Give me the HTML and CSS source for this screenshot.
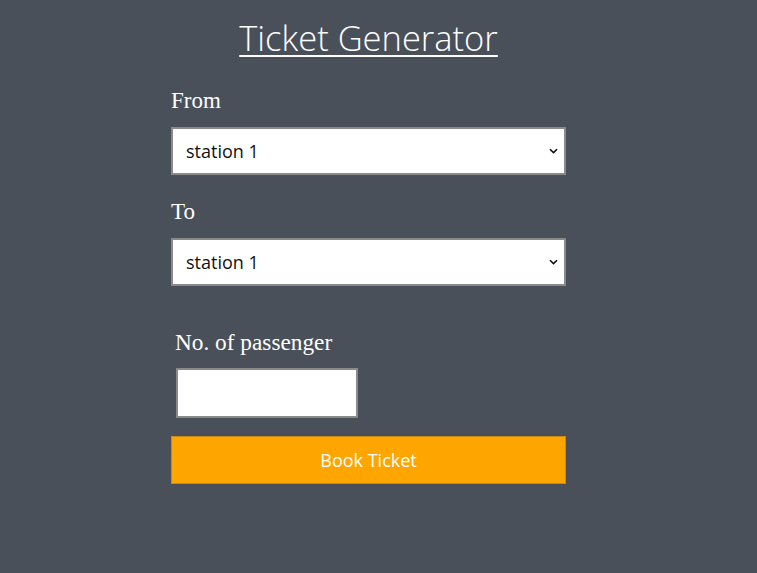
FILE: index.html
```html
<!DOCTYPE html>
<html lang="en">
<head>
<meta charset="utf-8">
<title>Ticket Generator</title>
<link rel="stylesheet" href="styles.css">
</head>
<body>
<main class="form">
  <h1 class="title">Ticket Generator</h1>
  <label class="label" for="from">From</label>
  <div class="select-wrap">
    <select id="from" class="select">
      <option>station 1</option>
      <option>station 2</option>
      <option>station 3</option>
    </select>
    <svg class="chevron" width="9" height="6" viewBox="0 0 9 6"><path d="M1 1.2 L4.5 4.6 L8 1.2" fill="none" stroke="#111" stroke-width="1.6"/></svg>
  </div>
  <label class="label label-to" for="to">To</label>
  <div class="select-wrap">
    <select id="to" class="select">
      <option>station 1</option>
      <option>station 2</option>
      <option>station 3</option>
    </select>
    <svg class="chevron" width="9" height="6" viewBox="0 0 9 6"><path d="M1 1.2 L4.5 4.6 L8 1.2" fill="none" stroke="#111" stroke-width="1.6"/></svg>
  </div>
  <div class="passenger">
    <label class="label label-passenger" for="count">No. of passenger</label>
    <input id="count" class="count" type="text">
  </div>
  <button class="book" type="button">Book Ticket</button>
</main>
</body>
</html>
```

FILE: styles.css
```css
html, body {
  margin: 0;
  padding: 0;
}
body {
  background: #4a5059;
  min-height: 573px;
  padding-right: 20px;
  font-family: "Open Sans", "Noto Sans", sans-serif;
}
.form {
  width: 395px;
  margin: 0 auto;
  display: flex;
  flex-direction: column;
}
.title {
  margin: 0;
  padding-top: 16px;
  font-size: 34.5px;
  line-height: 43px;
  font-weight: 300;
  color: #ffffff;
  text-align: center;
  text-decoration: underline;
  text-decoration-thickness: 2px;
  text-underline-offset: 4px;
}
.label {
  display: block;
  margin-top: 27px;
  font-family: "Liberation Serif", "Times New Roman", serif;
  font-size: 23px;
  line-height: 30px;
  color: #ffffff;
}
.label-to {
  margin-top: 22px;
}
.select-wrap {
  position: relative;
  margin-top: 11px;
}
.select {
  display: block;
  width: 395px;
  height: 48px;
  box-sizing: border-box;
  appearance: none;
  -webkit-appearance: none;
  background: #ffffff;
  border: 2px solid #8a8a8a;
  border-radius: 0;
  padding: 0 0 0 13px;
  font-family: "Open Sans", "Noto Sans", sans-serif;
  font-size: 18px;
  color: #111;
  outline: none;
}
.chevron {
  position: absolute;
  right: 8px;
  top: 21px;
}
.passenger {
  display: flex;
  flex-direction: column;
  align-items: flex-start;
  padding-left: 4px;
  margin-top: 41px;
}
.label-passenger {
  margin-top: 0;
  font-size: 23.3px;
}
.count {
  margin-top: 11px;
  margin-left: 1px;
  width: 182px;
  height: 50px;
  box-sizing: border-box;
  border: 2px solid #8a8a8a;
  background: #ffffff;
  border-radius: 0;
  outline: none;
}
.book {
  margin-top: 18px;
  width: 395px;
  height: 48px;
  box-sizing: border-box;
  background: #ffa500;
  border: 1px solid #c8891a;
  border-radius: 0;
  color: #ffffff;
  font-family: "Open Sans", "Noto Sans", sans-serif;
  font-size: 18px;
  padding: 0;
  cursor: pointer;
}
```
